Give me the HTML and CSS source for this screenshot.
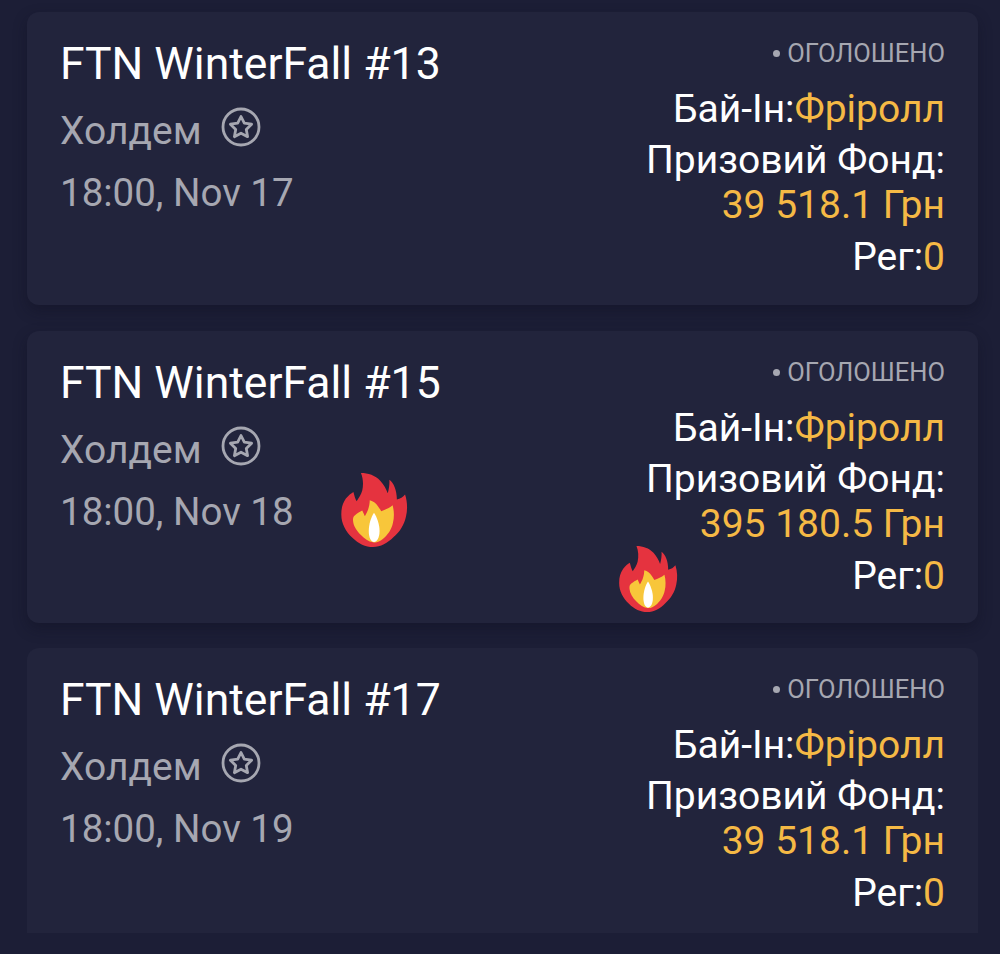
FILE: index.html
```html
<!DOCTYPE html>
<html lang="en">
<head>
    <meta charset="UTF-8">
    <meta name="viewport" content="width=device-width, initial-scale=1.0">
    <title>Tournaments</title>
    <link rel="stylesheet" href="styles.css">
</head>
<body>
    <svg class="defs" width="0" height="0">
        <symbol id="flame" viewBox="14 12 208 229" preserveAspectRatio="none">
            <path fill="#e5333f" d="M78 15 C100 15 122 22 137 38 C148 50 155 62 160 76 C164 62 166 48 165 35 C178 44 188 66 188 95 C198 93 207 88 213 80 C220 100 221 125 216 145 C211 170 197 192 178 208 C160 226 138 238 115 238 C92 238 70 228 52 210 C32 192 18 168 18 140 C18 120 22 106 32 92 C40 82 48 76 55 72 C58 82 60 92 65 100 C72 90 79 80 82 68 C86 50 85 32 78 15 Z"/>
            <path fill="#f8c63a" d="M105 97 C116 100 125 106 130 115 C134 120 137 125 140 130 C152 126 165 120 175 112 C180 130 180 150 176 165 C172 185 160 202 145 214 C135 222 125 226 115 224 C102 222 88 213 78 202 C65 190 55 175 54 160 C53 150 55 146 60 142 C67 136 75 132 82 128 C85 134 88 140 90 145 C94 138 98 131 100 125 C103 116 105 106 105 97 Z"/>
            <path fill="#fff" d="M118 135 C127 148 135 170 135 190 C135 210 127 223 118 223 C109 223 102 210 102 190 C102 170 109 148 118 135 Z"/>
        </symbol>
        <symbol id="star-badge" viewBox="0 0 40 40">
            <circle cx="20" cy="20" r="18" fill="none" stroke="currentColor" stroke-width="2.8"/>
            <path fill="none" stroke="currentColor" stroke-width="2.8" stroke-linejoin="round" d="M20 9.5 L23.3 16.2 L30.6 17.2 L25.3 22.4 L26.6 29.7 L20 26.2 L13.4 29.7 L14.7 22.4 L9.4 17.2 L16.7 16.2 Z"/>
        </symbol>
    </svg>

    <div class="list">
        <div class="card">
            <div class="info">
                <div class="name">FTN WinterFall #13</div>
                <div class="game">Холдем <svg class="star"><use href="#star-badge"/></svg></div>
                <div class="date">18:00, Nov 17</div>
            </div>
            <div class="details">
                <div class="status"><span class="dot"></span>ОГОЛОШЕНО</div>
                <div class="buyin">Бай-Ін:<span class="gold">Фріролл</span></div>
                <div class="prize">Призовий Фонд:</div>
                <div class="amount gold">39 518.1 Грн</div>
                <div class="reg">Рег:<span class="gold">0</span></div>
            </div>
        </div>

        <div class="card card-mid">
            <div class="info">
                <div class="name">FTN WinterFall #15</div>
                <div class="game">Холдем <svg class="star"><use href="#star-badge"/></svg></div>
                <div class="date">18:00, Nov 18</div>
            </div>
            <div class="details">
                <div class="status"><span class="dot"></span>ОГОЛОШЕНО</div>
                <div class="buyin">Бай-Ін:<span class="gold">Фріролл</span></div>
                <div class="prize">Призовий Фонд:</div>
                <div class="amount gold">395 180.5 Грн</div>
                <div class="reg">Рег:<span class="gold">0</span></div>
            </div>
            <svg class="flame flame-date"><use href="#flame"/></svg>
            <svg class="flame flame-prize"><use href="#flame"/></svg>
        </div>

        <div class="card card-last">
            <div class="info">
                <div class="name">FTN WinterFall #17</div>
                <div class="game">Холдем <svg class="star"><use href="#star-badge"/></svg></div>
                <div class="date">18:00, Nov 19</div>
            </div>
            <div class="details">
                <div class="status"><span class="dot"></span>ОГОЛОШЕНО</div>
                <div class="buyin">Бай-Ін:<span class="gold">Фріролл</span></div>
                <div class="prize">Призовий Фонд:</div>
                <div class="amount gold">39 518.1 Грн</div>
                <div class="reg">Рег:<span class="gold">0</span></div>
            </div>
        </div>
    </div>
</body>
</html>
```

FILE: styles.css
```css
body {
    font-family: Roboto, "Liberation Sans", sans-serif;
    margin: 0;
    background-color: #1c1e36;
    color: #fff;
    height: 954px;
    overflow: hidden;
}
.defs {
    display: block;
    height: 0;
}
.list {
    display: flex;
    flex-direction: column;
    gap: 26px;
    padding: 12px 22px 0 27px;
}
.card {
    position: relative;
    display: flex;
    justify-content: space-between;
    box-sizing: border-box;
    height: 293px;
    padding: 26px 33px 0 33px;
    background-color: #22243c;
    border-radius: 12px;
    box-shadow: 0 6px 14px rgba(15, 16, 32, 0.4);
}
.card-mid {
    height: 292px;
    margin-bottom: -1px;
}
.card-last {
    height: 285px;
    border-radius: 12px 12px 0 0;
    box-shadow: none;
}
.name {
    font-size: 44.5px;
    line-height: 52px;
}
.game {
    display: flex;
    align-items: center;
    gap: 19px;
    margin-top: 19px;
    font-size: 39px;
    line-height: 44px;
    color: #a6a7b1;
}
.star {
    width: 40px;
    height: 40px;
    margin-top: -8px;
}
.date {
    margin-top: 18px;
    font-size: 38.5px;
    line-height: 44px;
    color: #a6a7b1;
}
.details {
    text-align: right;
    font-size: 39px;
    line-height: 44px;
}
.status {
    display: flex;
    align-items: center;
    justify-content: flex-end;
    font-size: 25.5px;
    line-height: 30px;
    color: #a6a7b1;
}
.dot {
    width: 7px;
    height: 7px;
    margin-right: 7px;
    border-radius: 50%;
    background-color: #a6a7b1;
}
.buyin {
    margin-top: 19px;
}
.prize {
    margin-top: 7px;
}
.amount {
    margin-top: 1px;
}
.reg {
    margin-top: 8px;
}
.gold {
    color: #f5b945;
}
.flame {
    position: absolute;
}
.flame-date {
    left: 313px;
    top: 141px;
    width: 68px;
    height: 76px;
}
.flame-prize {
    left: 591px;
    top: 214px;
    width: 60px;
    height: 68px;
}
```
